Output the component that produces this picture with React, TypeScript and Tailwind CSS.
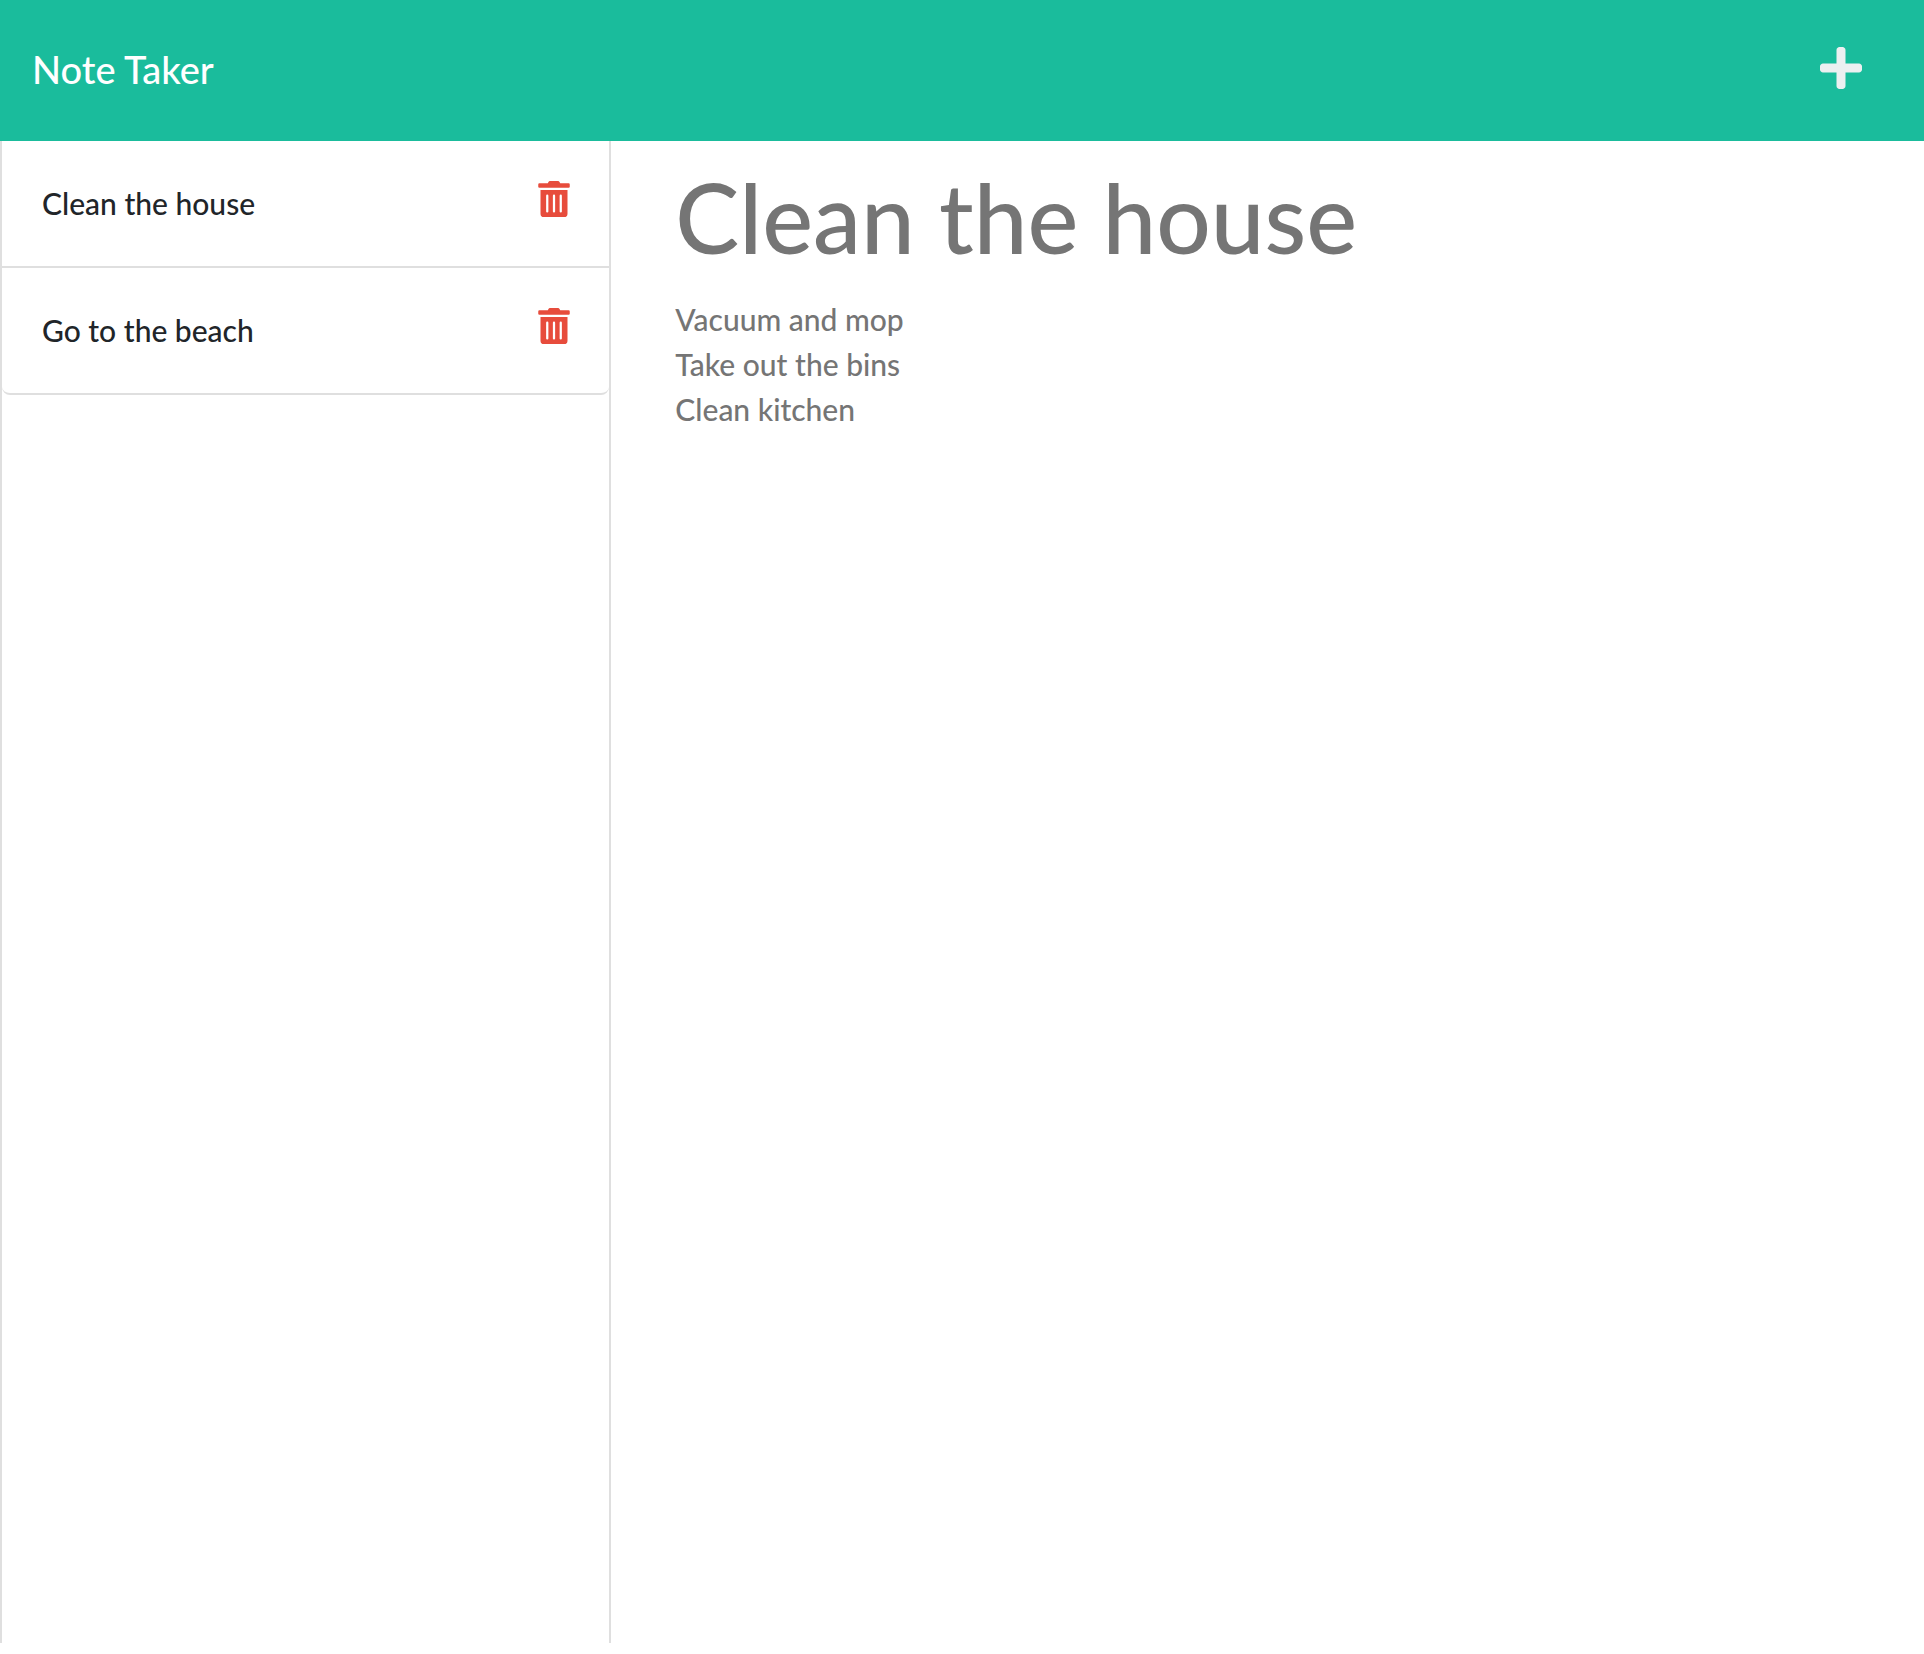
import { useState } from "react";
import { FaPlus, FaTrashAlt } from "react-icons/fa";

const initialNotes = [
  { id: 1, title: "Clean the house", text: "Vacuum and mop\nTake out the bins\nClean kitchen" },
  { id: 2, title: "Go to the beach", text: "" },
];

export default function App() {
  const [notes, setNotes] = useState(initialNotes);
  const [draft, setDraft] = useState({ title: initialNotes[0].title, text: initialNotes[0].text });

  return (
    <div className="flex min-h-screen flex-col bg-white pb-[11px] font-['Lato',sans-serif] text-[30px] leading-[45px] font-medium text-[#212529]">
      <header className="flex items-center justify-between bg-[#1abc9c] px-8 pt-[41px] pr-[62px] pb-[43px]">
        <a href="#" className="text-[38px] leading-[57px] text-white">
          Note Taker
        </a>
        <button
          type="button"
          aria-label="New note"
          className="mb-1 text-[48px] text-[#ecf0f1]"
          onClick={() => setDraft({ title: "", text: "" })}
        >
          <FaPlus className="w-[42px]" />
        </button>
      </header>
      <div className="flex grow">
        <div className="flex w-1/3 pr-[30px]">
          <aside className="w-full border-x-2 border-[#dfdfdf]">
            <ul>
              {notes.map((note) => (
                <li
                  key={note.id}
                  className="flex items-start justify-between border-b-2 border-[#dfdfdf] py-10 pr-[39px] pl-10 last:rounded-b-lg"
                >
                  <button type="button" className="text-left" onClick={() => setDraft(note)}>
                    {note.title}
                  </button>
                  <button
                    type="button"
                    aria-label={`Delete ${note.title}`}
                    className="text-[36px] text-[#e74c3c]"
                    onClick={() => setNotes(notes.filter((n) => n.id !== note.id))}
                  >
                    <FaTrashAlt className="w-8" />
                  </button>
                </li>
              ))}
            </ul>
          </aside>
        </div>
        <main className="flex grow flex-col px-[34px] pt-[18px] text-[#757575]">
          <input
            aria-label="Note title"
            className="w-full text-[96px] leading-[116px] outline-none"
            value={draft.title}
            onChange={(e) => setDraft({ ...draft, title: e.target.value })}
          />
          <textarea
            aria-label="Note text"
            className="mt-[22px] w-full grow resize-none outline-none"
            value={draft.text}
            onChange={(e) => setDraft({ ...draft, text: e.target.value })}
          />
        </main>
      </div>
    </div>
  );
}
